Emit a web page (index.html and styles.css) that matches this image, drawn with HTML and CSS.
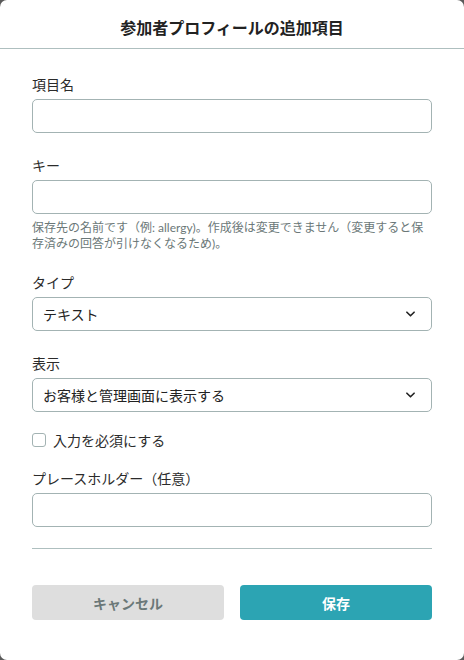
FILE: index.html
```html
<!DOCTYPE html>
<html lang="ja">
<head>
<meta charset="utf-8">
<title>参加者プロフィールの追加項目</title>
<link rel="stylesheet" href="styles.css">
</head>
<body>
<div class="modal">
  <div class="modal-header">参加者プロフィールの追加項目</div>
  <div class="modal-body">
    <div class="field first">
      <div class="label">項目名</div>
      <div class="input"></div>
    </div>
    <div class="field">
      <div class="label">キー</div>
      <div class="input"></div>
      <div class="help">保存先の名前です（例: allergy)。作成後は変更できません（変更すると保存済みの回答が引けなくなるため)。</div>
    </div>
    <div class="field gap-sm">
      <div class="label">タイプ</div>
      <div class="select"><span>テキスト</span><svg class="chev" viewBox="0 0 10 6" width="9" height="6"><path d="M1 1 L5 5 L9 1" fill="none" stroke="#222" stroke-width="1.8" stroke-linecap="round" stroke-linejoin="round"/></svg></div>
    </div>
    <div class="field">
      <div class="label">表示</div>
      <div class="select"><span>お客様と管理画面に表示する</span><svg class="chev" viewBox="0 0 10 6" width="9" height="6"><path d="M1 1 L5 5 L9 1" fill="none" stroke="#222" stroke-width="1.8" stroke-linecap="round" stroke-linejoin="round"/></svg></div>
    </div>
    <label class="check">
      <span class="box"></span>
      <span>入力を必須にする</span>
    </label>
    <div class="field gap-xs">
      <div class="label">プレースホルダー（任意）</div>
      <div class="input"></div>
    </div>
    <div class="divider"></div>
    <div class="actions">
      <div class="btn btn-cancel">キャンセル</div>
      <div class="btn btn-save">保存</div>
    </div>
  </div>
</div>
</body>
</html>
```

FILE: styles.css
```css
html, body {
  margin: 0;
  padding: 0;
}
body {
  background: #5a5a5a;
  font-family: Lato, "Noto Sans CJK JP", sans-serif;
  color: #2b2b2b;
}
.modal {
  width: 464px;
  height: 660px;
  background: #ffffff;
  border-radius: 7px;
  box-sizing: border-box;
  display: flex;
  flex-direction: column;
}
.modal-header {
  height: 49px;
  box-sizing: border-box;
  border-bottom: 1px solid #aebfbf;
  display: flex;
  align-items: center;
  justify-content: center;
  font-size: 16px;
  font-weight: 700;
  color: #222;
  padding-top: 9px;
  padding-bottom: 4px;
}
.modal-body {
  padding: 0 32px;
  display: flex;
  flex-direction: column;
}
.field {
  margin-top: 23px;
  display: flex;
  flex-direction: column;
}
.field.first {
  margin-top: 26px;
}
.field.gap-sm {
  margin-top: 21px;
}
.field.gap-xs {
  margin-top: 19px;
}
.label {
  font-size: 14px;
  line-height: 20px;
  margin-bottom: 4px;
  color: #2b2b2b;
}
.input, .select {
  height: 34px;
  box-sizing: border-box;
  border: 1px solid #a3b3b3;
  border-radius: 5px;
  background: #fff;
}
.select {
  display: flex;
  align-items: center;
  justify-content: space-between;
  padding: 0 16px 0 10px;
  font-size: 14px;
  color: #222;
}
.chev {
  display: block;
}
.help {
  margin-top: 6px;
  font-size: 12px;
  line-height: 16px;
  color: #6b7878;
}
.check {
  margin-top: 18px;
  height: 20px;
  display: flex;
  align-items: center;
  gap: 7px;
  font-size: 14px;
  color: #2b2b2b;
}
.box {
  width: 14px;
  height: 14px;
  box-sizing: border-box;
  border: 1px solid #a3b3b3;
  border-radius: 3px;
  background: #fff;
}
.divider {
  margin-top: 21px;
  height: 1px;
  background: #aebfbf;
}
.actions {
  margin-top: 36px;
  display: flex;
  gap: 16px;
}
.btn {
  flex: 1;
  height: 35px;
  border-radius: 4px;
  display: flex;
  align-items: center;
  justify-content: center;
  font-size: 14px;
  font-weight: 700;
}
.btn-cancel {
  background: #dedede;
  color: #6b7878;
}
.btn-save {
  background: #2ca4b3;
  color: #ffffff;
}
```
